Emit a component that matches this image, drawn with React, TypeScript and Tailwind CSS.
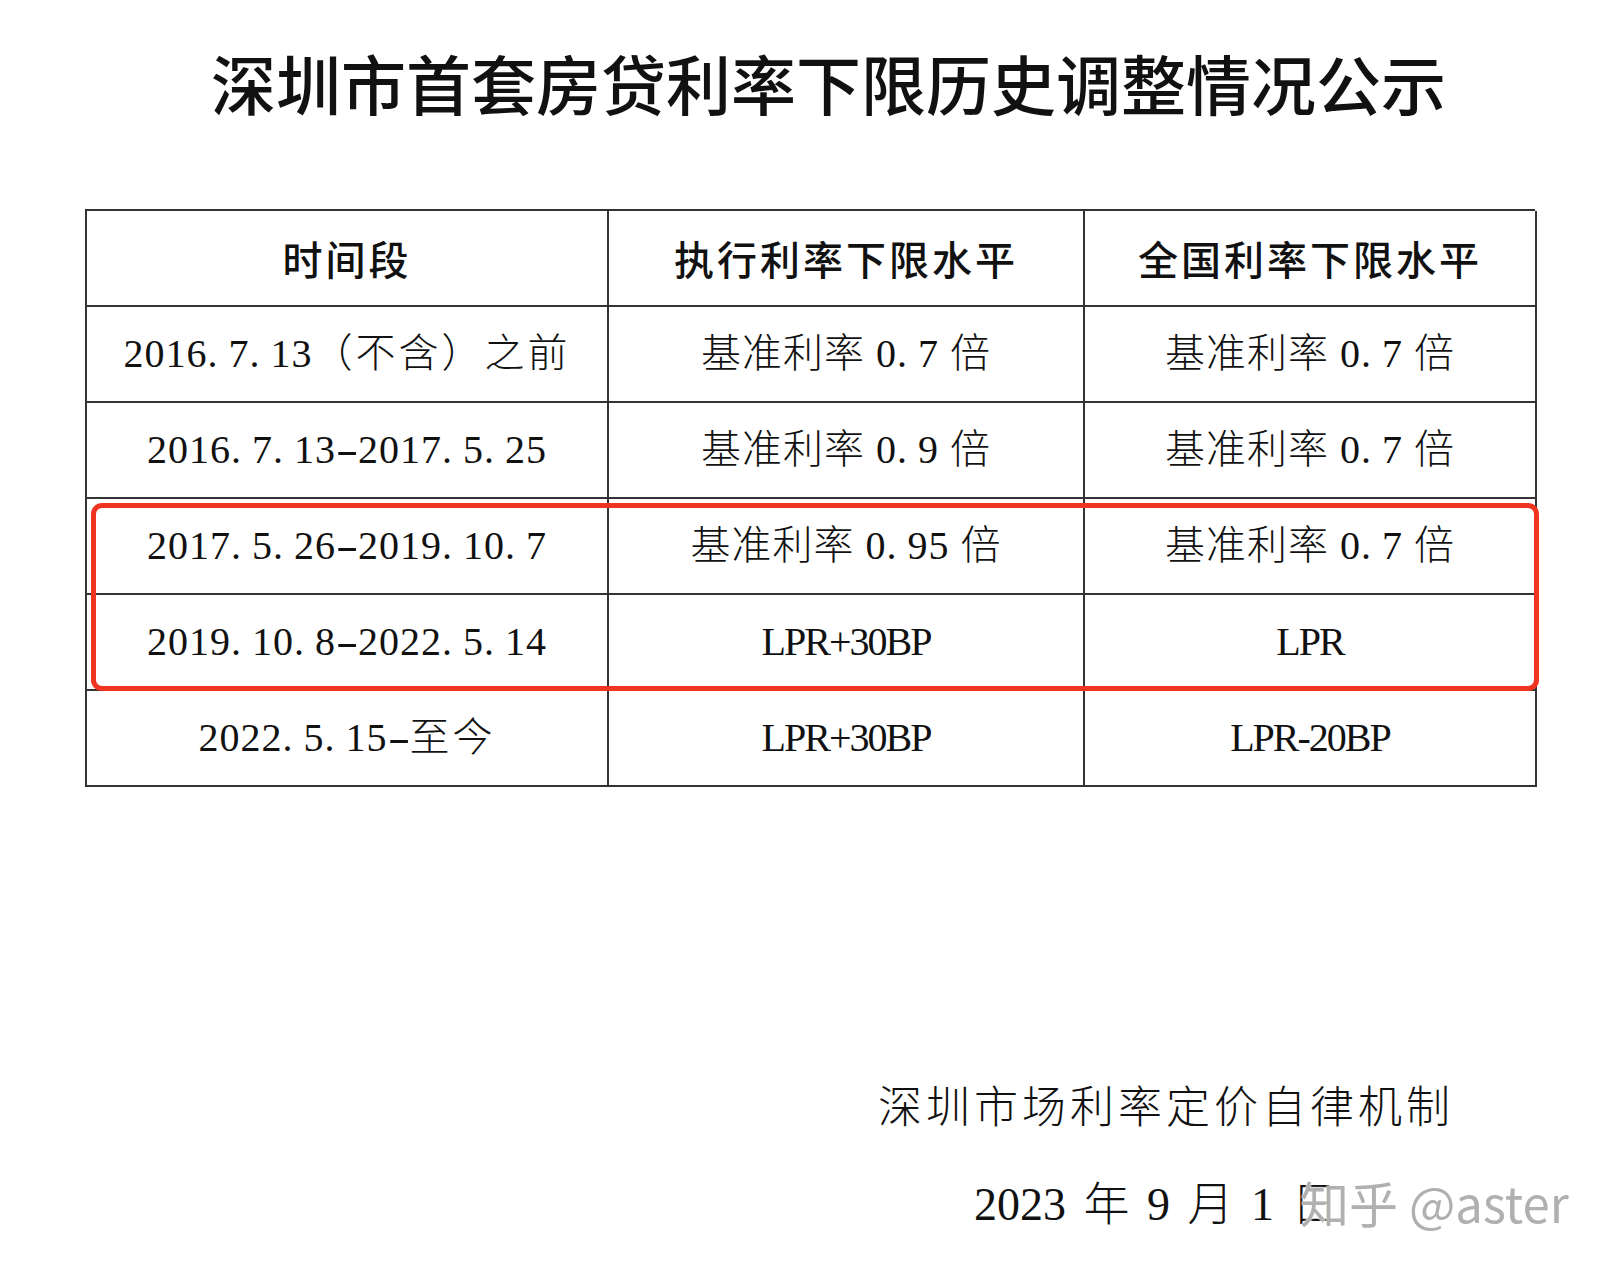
import React from "react";

const SERIF = "font-['Liberation_Serif','Noto_Sans_CJK_SC',serif]";

function Num({ text }: { text: string }) {
  const parts = text.split(/([.\-])/);
  return (
    <span className="tracking-[1px]">
      {parts.map((p, i) =>
        p === "." ? (
          <span key={i} className="mr-[10px]">.</span>
        ) : p === "-" ? (
          <span key={i} className="inline-block w-[22px] text-center tracking-normal scale-x-[1.7]">-</span>
        ) : (
          <React.Fragment key={i}>{p}</React.Fragment>
        )
      )}
    </span>
  );
}

type Row = { a: React.ReactNode; b: React.ReactNode; c: React.ReactNode };

const rate = (n: string) => (
  <span className="tracking-[1px]">
    基准利率 <Num text={n} /> 倍
  </span>
);

const lpr = (s: string) => <span className="tracking-[-2px]">{s}</span>;

const rows: Row[] = [
  {
    a: (
      <span>
        <Num text="2016.7.13" />
        <span className="tracking-[3px]">（不含）之前</span>
      </span>
    ),
    b: rate("0.7"),
    c: rate("0.7"),
  },
  { a: <Num text="2016.7.13-2017.5.25" />, b: rate("0.9"), c: rate("0.7") },
  { a: <Num text="2017.5.26-2019.10.7" />, b: rate("0.95"), c: rate("0.7") },
  { a: <Num text="2019.10.8-2022.5.14" />, b: lpr("LPR+30BP"), c: lpr("LPR") },
  {
    a: (
      <span>
        <Num text="2022.5.15-" />
        <span className="tracking-[3px]">至今</span>
      </span>
    ),
    b: lpr("LPR+30BP"),
    c: lpr("LPR-20BP"),
  },
];

function Cell({ children, head }: { children: React.ReactNode; head?: boolean }) {
  return (
    <div
      className={
        "h-[96px] border-r-2 border-b-2 border-[#333] flex items-center justify-center whitespace-nowrap text-[40px] leading-none text-[#111] " +
        (head ? "font-['Noto_Sans_CJK_SC',sans-serif] font-medium tracking-[3px]" : SERIF + " font-light")
      }
    >
      {children}
    </div>
  );
}

export default function App() {
  return (
    <div className="w-[1612px] h-[1276px] bg-white flex flex-col relative overflow-hidden">
      <h1 className="ml-[211px] mt-[50px] text-[65px] leading-[65px] font-medium text-[#111] whitespace-nowrap font-['Noto_Sans_CJK_SC',sans-serif]">
        深圳市首套房贷利率下限历史调整情况公示
      </h1>

      <div className="ml-[85px] mt-[94px] relative w-[1450px]">
        <div className="grid grid-cols-[522px_476px_452px] border-t-2 border-l-2 border-[#333]">
          <Cell head>时间段</Cell>
          <Cell head>执行利率下限水平</Cell>
          <Cell head>全国利率下限水平</Cell>
          {rows.map((r, i) => (
            <React.Fragment key={i}>
              <Cell>{r.a}</Cell>
              <Cell>{r.b}</Cell>
              <Cell>{r.c}</Cell>
            </React.Fragment>
          ))}
        </div>
        <div className="absolute left-[6px] top-[294px] w-[1448px] h-[188px] border-[5px] border-[#f0341f] rounded-[11px]" />
      </div>

      <div className={"ml-[878px] mt-[300px] flex flex-col text-[#111] " + SERIF + " font-light"}>
        <div className="text-[44px] leading-[44px] tracking-[4px] whitespace-nowrap">深圳市场利率定价自律机制</div>
        <div className="ml-[96px] mt-[51px] text-[46px] leading-[46px] whitespace-nowrap [word-spacing:6px]">
          2023 年 9 月 1 日
        </div>
      </div>

      <div className="absolute left-[1300px] top-[1174px] text-[49px] leading-[56px] text-[#b0b0b0] whitespace-nowrap font-['Noto_Sans_CJK_SC',sans-serif] [text-shadow:0_0_2px_#fff,0_0_2px_#fff]">
        知乎 @aster
      </div>
    </div>
  );
}
